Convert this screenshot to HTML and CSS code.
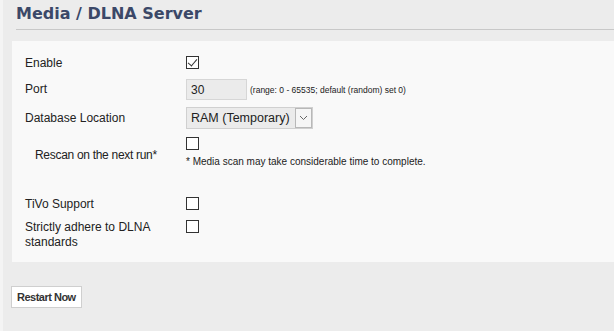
FILE: index.html
```html
<!DOCTYPE html>
<html lang="en">
<head>
    <meta charset="UTF-8">
    <meta name="viewport" content="width=device-width, initial-scale=1.0">
    <link rel="stylesheet" href="styles.css">
    <title>Media / DLNA Server</title>
</head>
<body>
    <div class="page">
        <h1 class="page-title">Media / DLNA Server</h1>

        <div class="panel">
            <form class="settings">
                <div class="row row-enable">
                    <label class="field-label" for="enable">Enable</label>
                    <div class="field">
                        <input type="checkbox" id="enable" class="check" checked>
                    </div>
                </div>

                <div class="row row-port">
                    <label class="field-label pad-3" for="port">Port</label>
                    <div class="field inline">
                        <input type="text" id="port" class="port-input" value="30">
                        <span class="note">(range: 0 - 65535; default (random) set 0)</span>
                    </div>
                </div>

                <div class="row row-db">
                    <label class="field-label pad-4" for="dbloc">Database Location</label>
                    <div class="field">
                        <div class="select-box" id="dbloc">
                            <span class="select-value">RAM (Temporary)</span>
                            <span class="select-arrow">
                                <svg width="9" height="6" viewBox="0 0 9 6"><path d="M1 1 L4.5 4.5 L8 1" fill="none" stroke="#666" stroke-width="1"/></svg>
                            </span>
                        </div>
                    </div>
                </div>

                <div class="row row-rescan">
                    <label class="field-label sub" for="rescan">Rescan on the next run*</label>
                    <div class="field stacked">
                        <input type="checkbox" id="rescan" class="check">
                        <span class="note wide">* Media scan may take considerable time to complete.</span>
                    </div>
                </div>

                <div class="row row-tivo">
                    <label class="field-label" for="tivo">TiVo Support</label>
                    <div class="field">
                        <input type="checkbox" id="tivo" class="check">
                    </div>
                </div>

                <div class="row">
                    <label class="field-label" for="strict">Strictly adhere to DLNA standards</label>
                    <div class="field">
                        <input type="checkbox" id="strict" class="check">
                    </div>
                </div>
            </form>
        </div>

        <button type="button" class="restart-btn">Restart Now</button>
    </div>
</body>
</html>
```

FILE: styles.css
```css
body {
    margin: 0;
    background-color: #ececec;
    font-family: "Liberation Sans", Arial, sans-serif;
    font-size: 12px;
    color: #222;
}

.page {
    border-left: 3px solid #f4f4f4;
    padding: 0 0 20px 8px;
    min-height: 311px;
}

.page-title {
    margin: 0 0 11px 5px;
    padding: 4px 0 6px 0;
    font-family: "DejaVu Sans", sans-serif;
    font-size: 16px;
    line-height: 19px;
    font-weight: bold;
    color: #3b4868;
    border-bottom: 1px solid #c8c8c8;
}

.panel {
    background-color: #f9f9f9;
    margin-left: 1px;
    padding: 15px 0 12px 13px;
}

.settings {
    display: flex;
    flex-direction: column;
}

.row {
    display: flex;
}

.row-enable {
    height: 23px;
}

.row-port {
    height: 28px;
}

.row-db {
    height: 30px;
}

.row-rescan {
    height: 60px;
}

.row-tivo {
    height: 23px;
}

.field-label {
    width: 151px;
    padding-right: 10px;
    line-height: 15px;
    flex-shrink: 0;
}

.field-label.pad-3 {
    padding-top: 3px;
}

.field-label.pad-4 {
    padding-top: 4px;
}

.field-label.sub {
    width: 141px;
    padding-left: 10px;
    padding-top: 11px;
    letter-spacing: -0.3px;
}

.field {
    display: flex;
    align-items: flex-start;
}

.field.inline {
    align-items: center;
    align-self: flex-start;
    gap: 3px;
}

.field.stacked {
    flex-direction: column;
    gap: 6px;
}

.check {
    appearance: none;
    width: 13px;
    height: 13px;
    margin: 0;
    border: 1px solid #333;
    background: #fff;
    position: relative;
}

.check:checked::after {
    content: "";
    position: absolute;
    left: 3px;
    top: 0px;
    width: 4px;
    height: 8px;
    border-right: 1px solid #333;
    border-bottom: 1px solid #333;
    transform: rotate(40deg);
}

.port-input {
    width: 61px;
    height: 21px;
    box-sizing: border-box;
    margin: 0;
    padding: 0 4px;
    border: 1px solid #d6d6d6;
    background-color: #ebebeb;
    font-family: "Liberation Sans", sans-serif;
    font-size: 12px;
    color: #222;
}

.note {
    font-family: "Liberation Sans", sans-serif;
    font-size: 8.5px;
    color: #222;
}

.note.wide {
    font-size: 10px;
}

.select-box {
    display: flex;
    width: 127px;
    height: 22px;
    box-sizing: border-box;
    border: 1px solid #d0d0d0;
    background-color: #ebebeb;
}

.select-value {
    flex: 1;
    padding: 0 4px;
    line-height: 20px;
    font-size: 12.5px;
}

.select-arrow {
    width: 15px;
    display: flex;
    align-items: center;
    justify-content: center;
    border: 1px solid #b8b8b8;
    background-color: #f6f6f6;
}

.restart-btn {
    margin: 24px 0 0 0;
    padding: 4px 5px;
    background-color: #fff;
    border: 1px solid #cfcfcf;
    font-family: "Liberation Sans", sans-serif;
    font-size: 11px;
    letter-spacing: -0.5px;
    font-weight: bold;
    color: #333;
}
```
